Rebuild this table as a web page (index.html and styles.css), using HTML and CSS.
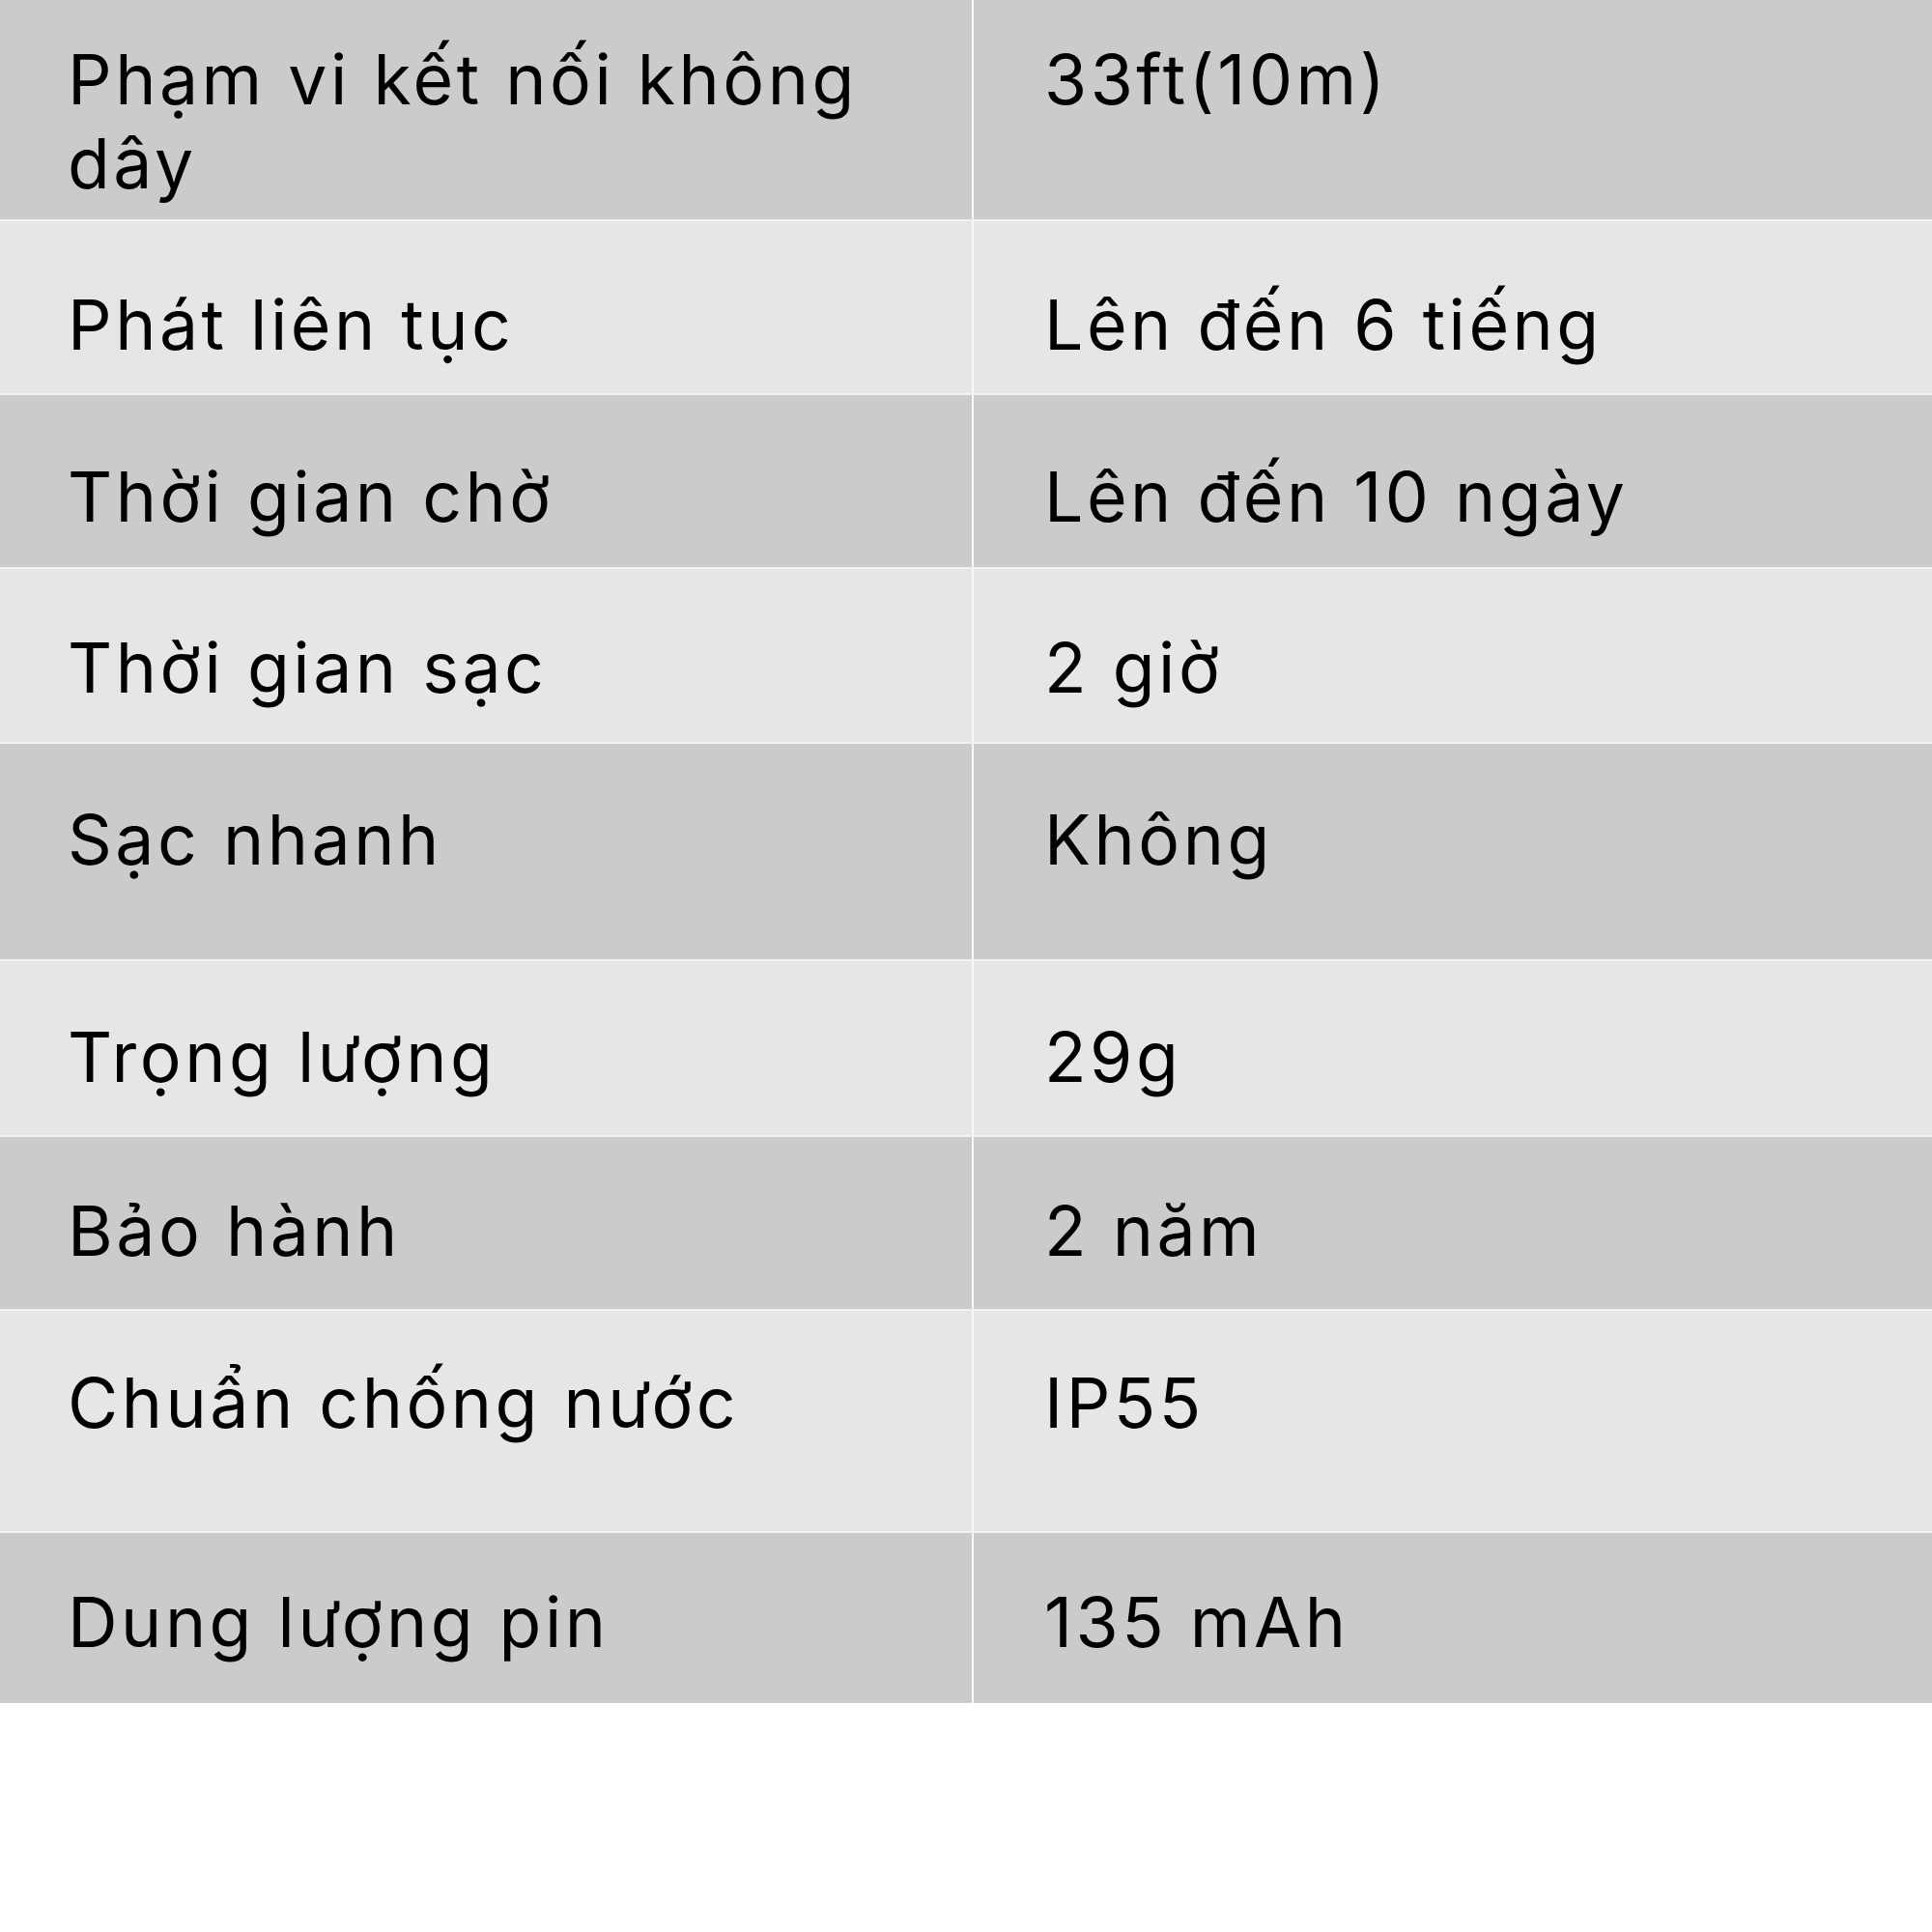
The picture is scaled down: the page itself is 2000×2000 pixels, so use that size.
FILE: index.html
```html
<!DOCTYPE html>
<html lang="vi">
<head>
<meta charset="utf-8">
<title>Thông số kỹ thuật</title>
<link rel="stylesheet" href="styles.css">
</head>
<body>
<div class="spec-table">
  <div class="row"><div class="cell label">Phạm vi kết nối không dây</div><div class="cell value">33ft(10m)</div></div>
  <div class="row alt"><div class="cell label">Phát liên tục</div><div class="cell value">Lên đến 6 tiếng</div></div>
  <div class="row"><div class="cell label">Thời gian chờ</div><div class="cell value">Lên đến 10 ngày</div></div>
  <div class="row alt"><div class="cell label">Thời gian sạc</div><div class="cell value">2 giờ</div></div>
  <div class="row"><div class="cell label">Sạc nhanh</div><div class="cell value">Không</div></div>
  <div class="row alt"><div class="cell label">Trọng lượng</div><div class="cell value">29g</div></div>
  <div class="row"><div class="cell label">Bảo hành</div><div class="cell value">2 năm</div></div>
  <div class="row alt"><div class="cell label">Chuẩn chống nước</div><div class="cell value">IP55</div></div>
  <div class="row"><div class="cell label">Dung lượng pin</div><div class="cell value">135 mAh</div></div>
</div>
</body>
</html>
```

FILE: styles.css
```css
html, body {
  margin: 0;
  padding: 0;
  background: #ffffff;
  overflow: hidden;
}
.spec-table {
  display: flex;
  flex-direction: column;
  gap: 2px;
  margin-top: -26px;
  background: #f2f2f2;
  font-family: Inter, "Noto Sans", sans-serif;
  font-size: 71.5px;
  line-height: 87px;
  letter-spacing: 3.5px;
  color: #000;
}
.row {
  display: grid;
  grid-template-columns: 1006px 1fr;
  column-gap: 2px;
  height: 178px;
  background: #f8f8f8;
  --pad: 58px;
}
.row:nth-child(1) { height: 253px; --pad: 64.5px; }
.row:nth-child(2) { height: 178px; --pad: 63.5px; }
.row:nth-child(3) { height: 178px; --pad: 61.5px; }
.row:nth-child(4) { height: 179px; --pad: 58.5px; }
.row:nth-child(5) { height: 223px; --pad: 55.5px; }
.row:nth-child(6) { height: 180px; --pad: 55.5px; }
.row:nth-child(7) { height: 178px; --pad: 53.5px; }
.row:nth-child(8) { height: 228px; --pad: 51.5px; }
.row:nth-child(9) { height: 176px; --pad: 48.5px; }
.cell {
  background: #cbcbcb;
  padding: var(--pad) 70px 0 70px;
}
.cell.value {
  padding-left: 73px;
}
.row.alt .cell {
  background: #e6e6e6;
}
```
